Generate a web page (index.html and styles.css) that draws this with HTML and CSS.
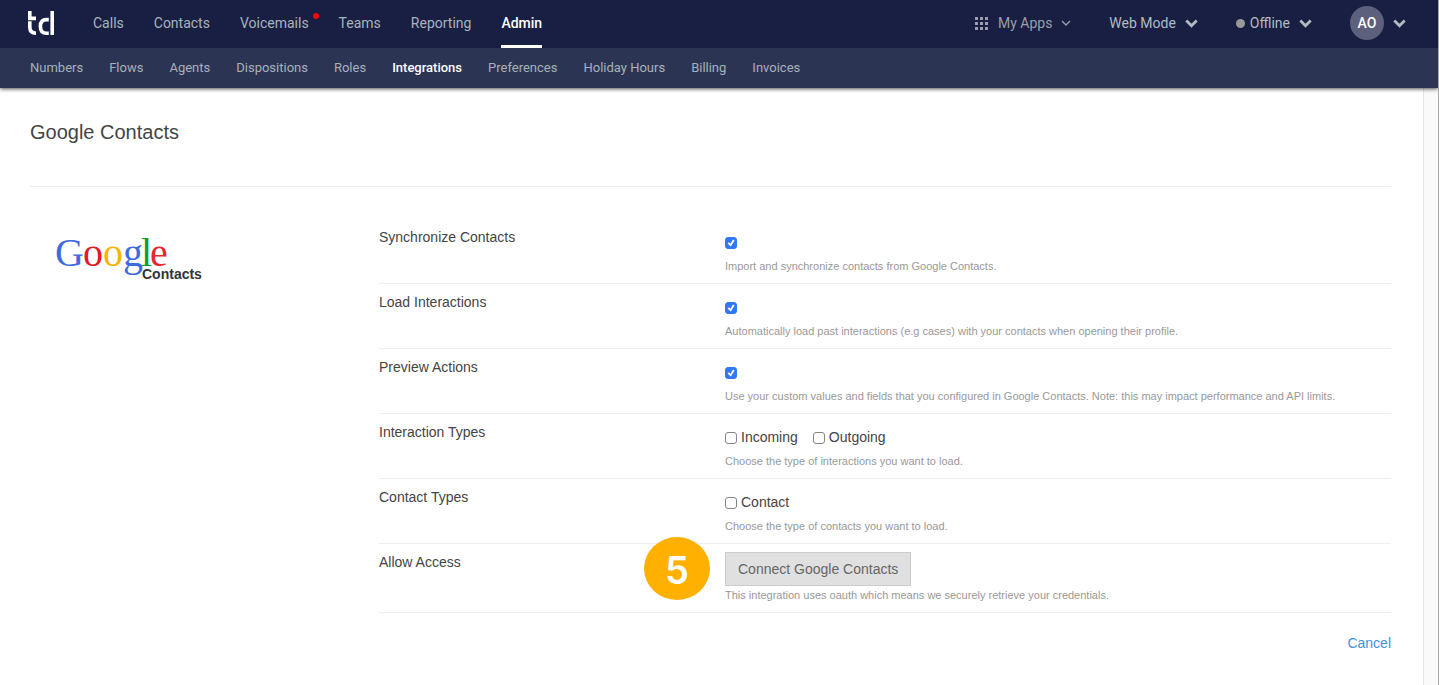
FILE: index.html
```html
<!DOCTYPE html>
<html lang="en">
<head>
<meta charset="utf-8">
<meta name="viewport" content="width=device-width, initial-scale=1">
<title>Google Contacts</title>
<link rel="stylesheet" href="styles.css">
</head>
<body>
<header class="header">
  <div class="topbar">
    <a class="brand" href="#" aria-label="Home">
      <svg width="28" height="26" viewBox="0 0 28 26" fill="none" stroke="#fff" stroke-width="3.6">
        <path d="M2.8 1V8.400H9"/>
        <path d="M2.800 11.300V17Q2.800 23.200 9 23.200"/>
        <path d="M21.800 9.600H19.500Q13.400 9.600 13.400 16.400T19.500 23.200H21.800"/>
        <path d="M25.200 1V25"/>
      </svg>
    </a>
    <nav class="nav" aria-label="Main">
      <a class="nav-link" href="#">Calls</a>
      <a class="nav-link" href="#">Contacts</a>
      <a class="nav-link" href="#">Voicemails<span class="unread"></span></a>
      <a class="nav-link" href="#">Teams</a>
      <a class="nav-link" href="#">Reporting</a>
      <a class="nav-link active" href="#" aria-current="page">Admin</a>
    </nav>
    <div class="tools">
      <button class="tool apps" type="button">
        <svg width="13" height="13" viewBox="0 0 13 13" fill="currentColor"><path d="M0 0h3v3H0zM5 0h3v3H5zM10 0h3v3h-3zM0 5h3v3H0zM5 5h3v3H5zM10 5h3v3h-3zM0 10h3v3H0zM5 10h3v3H5zM10 10h3v3h-3z"/></svg>
        <span class="apps-label">My Apps</span>
        <svg width="10" height="6" viewBox="0 0 10 6" fill="none" stroke="currentColor" stroke-width="1.4"><path d="M1 1l4 4 4-4"/></svg>
      </button>
      <button class="tool" type="button">Web Mode
        <svg class="chevron" width="13" height="9" viewBox="0 0 13 9"><path d="M1.300 1.500l5.200 5.200 5.200-5.200"/></svg>
      </button>
      <button class="tool" type="button"><span class="status-dot"></span>Offline
        <svg class="chevron" width="13" height="9" viewBox="0 0 13 9"><path d="M1.300 1.500l5.200 5.200 5.200-5.200"/></svg>
      </button>
      <button class="tool" type="button"><span class="avatar">AO</span>
        <svg class="chevron" width="13" height="9" viewBox="0 0 13 9"><path d="M1.300 1.500l5.200 5.200 5.200-5.200"/></svg>
      </button>
    </div>
  </div>
  <nav class="subnav" aria-label="Admin">
    <a class="subnav-link" href="#">Numbers</a>
    <a class="subnav-link" href="#">Flows</a>
    <a class="subnav-link" href="#">Agents</a>
    <a class="subnav-link" href="#">Dispositions</a>
    <a class="subnav-link" href="#">Roles</a>
    <a class="subnav-link active" href="#" aria-current="page">Integrations</a>
    <a class="subnav-link" href="#">Preferences</a>
    <a class="subnav-link" href="#">Holiday Hours</a>
    <a class="subnav-link" href="#">Billing</a>
    <a class="subnav-link" href="#">Invoices</a>
  </nav>
</header>
<div class="body">
  <main class="page">
    <h1 class="title">Google Contacts</h1>
    <div class="integration">
      <div class="logo">
        <svg width="152" height="60" viewBox="-2 0 152 60" role="img" aria-label="Google Contacts">
          <text class="logo-word" y="40"><tspan x="-1" fill="#3f6be0">G</tspan><tspan x="27" fill="#e01b22">o</tspan><tspan x="47" fill="#f5b400">o</tspan><tspan x="67" fill="#3f6be0">g</tspan><tspan x="85" fill="#0c9d2c">l</tspan><tspan x="94" fill="#e8262d">e</tspan></text>
          <text class="logo-sub" x="86" y="53">Contacts</text>
        </svg>
      </div>
      <form class="settings">
        <div class="row">
          <label class="name" for="sync">Synchronize Contacts</label>
          <div class="field">
            <div class="options"><input class="check" id="sync" type="checkbox" checked></div>
            <p class="help">Import and synchronize contacts from Google Contacts.</p>
          </div>
        </div>
        <div class="row">
          <label class="name" for="load">Load Interactions</label>
          <div class="field">
            <div class="options"><input class="check" id="load" type="checkbox" checked></div>
            <p class="help">Automatically load past interactions (e.g cases) with your contacts when opening their profile.</p>
          </div>
        </div>
        <div class="row">
          <label class="name" for="preview">Preview Actions</label>
          <div class="field">
            <div class="options"><input class="check" id="preview" type="checkbox" checked></div>
            <p class="help">Use your custom values and fields that you configured in Google Contacts. Note: this may impact performance and API limits.</p>
          </div>
        </div>
        <div class="row">
          <span class="name">Interaction Types</span>
          <div class="field">
            <div class="options">
              <label class="option"><input class="check" type="checkbox">Incoming</label>
              <label class="option"><input class="check" type="checkbox">Outgoing</label>
            </div>
            <p class="help">Choose the type of interactions you want to load.</p>
          </div>
        </div>
        <div class="row">
          <span class="name">Contact Types</span>
          <div class="field">
            <div class="options">
              <label class="option"><input class="check" type="checkbox">Contact</label>
            </div>
            <p class="help">Choose the type of contacts you want to load.</p>
          </div>
        </div>
        <div class="row">
          <span class="name">Allow Access</span>
          <div class="field">
            <span class="step">5</span>
            <button class="connect" type="button">Connect Google Contacts</button>
            <p class="help">This integration uses oauth which means we securely retrieve your credentials.</p>
          </div>
        </div>
        <div class="actions"><a class="cancel" href="#">Cancel</a></div>
      </form>
    </div>
  </main>
  <div class="gutter"></div>
</div>
</body>
</html>
```

FILE: styles.css
```css
* { box-sizing: border-box; }

body {
  margin: 0;
  min-height: 100vh;
  display: flex;
  flex-direction: column;
  border-right: 1px solid #a8a8a8;
  background: #fff;
  color: #444;
  font: 14px/20px "Liberation Sans", Arial, sans-serif;
}

a { text-decoration: none; }

button { font: inherit; cursor: pointer; }

/* Header */
.header {
  position: relative;
  font-family: Roboto, sans-serif;
  box-shadow: 0 1px 4px rgba(0, 0, 0, 0.7);
}

.topbar {
  display: flex;
  height: 48px;
  padding: 0 32px 0 27px;
  background: #181f42;
}

.brand {
  display: flex;
  align-items: center;
  padding-bottom: 2px;
  margin-right: 38px;
}

.nav { display: flex; gap: 30px; }

.nav-link {
  position: relative;
  padding: 13px 0 12px;
  border-bottom: 3px solid transparent;
  color: #a9b5bb;
}

.nav-link.active { border-color: #fff; color: #fff; font-weight: 500; }

.unread {
  position: absolute;
  top: 13px;
  right: -10px;
  width: 6px;
  height: 6px;
  border-radius: 50%;
  background: #f8040f;
}

.tools {
  display: flex;
  align-items: center;
  gap: 38px;
  padding-bottom: 2px;
  margin-left: auto;
}

.tool {
  display: flex;
  align-items: center;
  gap: 9px;
  padding: 0;
  border: 0;
  background: none;
  color: #b0bcc1;
}

.apps { color: #9b9eac; }
.apps-label { margin-left: 1px; }

.chevron { fill: none; stroke: currentColor; stroke-width: 2.8; }

.status-dot {
  width: 9px;
  height: 9px;
  margin-right: -4px;
  border-radius: 50%;
  background: #999;
}

.avatar {
  width: 34px;
  height: 34px;
  border-radius: 50%;
  background: #5d607c;
  color: #fff;
  font-weight: 500;
  line-height: 34px;
  text-align: center;
}

.subnav {
  display: flex;
  align-items: center;
  gap: 26px;
  height: 40px;
  padding: 0 30px;
  background: #2c3454;
  font-size: 13px;
}

.subnav-link { color: #a7b1ba; }
.subnav-link.active { color: #fff; font-weight: 500; }

/* Content */
.body { display: flex; flex: 1; }

.page { flex: 1; padding: 30px 32px 0 30px; }

.gutter {
  width: 15px;
  border-left: 1px solid #e6e6e6;
  background: #fafafa;
}

.title {
  margin: 0;
  padding-bottom: 40px;
  border-bottom: 1px solid #eee;
  font-size: 20px;
  font-weight: 400;
  line-height: 28px;
}

.integration {
  display: grid;
  grid-template-columns: 349px 1fr;
  padding-top: 32px;
}

.logo { padding: 7px 0 0 24px; }

.logo-word { font: 40px "Liberation Serif", serif; }
.logo-sub { font: bold 14px "Liberation Sans", Arial, sans-serif; fill: #333; }

.row {
  display: grid;
  grid-template-columns: 346px 1fr;
  padding: 8px 0 9px;
  border-bottom: 1px solid #eee;
}

.field { position: relative; }

.options {
  display: flex;
  gap: 15px;
  height: 20px;
  margin: 5px 0 6px;
  align-items: center;
}

.option { display: flex; align-items: center; gap: 4px; }

.check {
  appearance: none;
  width: 12px;
  height: 12px;
  margin: 2px 0 0;
  border: 1px solid #858585;
  border-radius: 3px;
  background: #fff;
}

.check:checked {
  border-color: #2f78f7;
  background: #2f78f7;
}

.check:checked::before {
  content: "";
  display: block;
  height: 10px;
  background: #fff;
  clip-path: polygon(16% 54%, 30% 42%, 44% 58%, 70% 14%, 86% 24%, 48% 86%);
}

.help {
  margin: 0;
  color: #999;
  font-size: 11px;
  line-height: 16px;
}

.connect {
  display: block;
  height: 34px;
  margin-bottom: 1px;
  padding: 0 12px;
  border: 1px solid #ccc;
  background: #e0e0e0;
  color: #666;
}

.step {
  position: absolute;
  top: -15px;
  left: -81px;
  width: 66px;
  height: 63px;
  border-radius: 50%;
  background: #ffb000;
  color: #fff;
  font: 600 38px/66px Inter, "Liberation Sans", sans-serif;
  text-align: center;
}

.actions { padding-top: 20px; text-align: right; }

.cancel { color: #3d94e0; }
```
